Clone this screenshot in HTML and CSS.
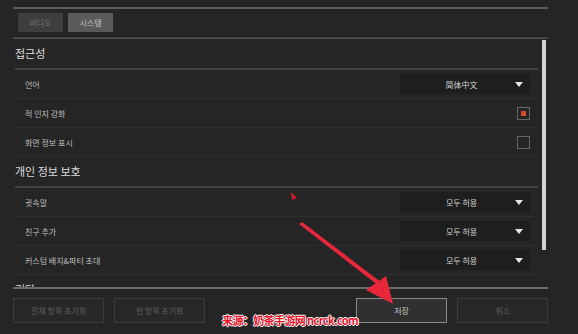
FILE: index.html
```html
<html>
<head>
<title>설정</title>
<meta http-equiv="Content-Type" content="text/html; charset=utf-8" />
<link rel="stylesheet" href="styles.css">
</head>
<body>
<div class="panel">
    <div class="top-line"></div>
    <div class="tabs">
        <div class="tab">비디오</div>
        <div class="tab active">시스템</div>
    </div>
    <div class="sep"></div>

    <div class="content">
        <div class="list">
            <div class="section-title">접근성</div>
            <div class="row">
                <span class="label">언어</span>
                <div class="select"><span>简体中文</span><i class="arrow"></i></div>
            </div>
            <div class="row">
                <span class="label">적 인지 강화</span>
                <div class="check on"></div>
            </div>
            <div class="row">
                <span class="label">화면 정보 표시</span>
                <div class="check"></div>
            </div>

            <div class="section-title">개인 정보 보호</div>
            <div class="row">
                <span class="label">귓속말</span>
                <div class="select"><span>모두 허용</span><i class="arrow"></i></div>
            </div>
            <div class="row">
                <span class="label">친구 추가</span>
                <div class="select"><span>모두 허용</span><i class="arrow"></i></div>
            </div>
            <div class="row">
                <span class="label">커스텀 배지&amp;파티 초대</span>
                <div class="select"><span>모두 허용</span><i class="arrow"></i></div>
            </div>

            <div class="section-title">기타</div>
        </div>
        <div class="scrollbar"><div class="thumb"></div></div>
    </div>

    <div class="bottom-line"></div>
    <div class="buttons">
        <div class="group">
            <div class="btn">전체 항목 초기화</div>
            <div class="btn">현 항목 초기화</div>
        </div>
        <div class="group">
            <div class="btn primary">저장</div>
            <div class="btn">취소</div>
        </div>
    </div>
</div>

<!-- 빨간 화살표 (덧그림) -->
<svg class="overlay" width="578" height="334" viewBox="0 0 578 334">
    <polygon points="291,192 297,198 292,200" fill="#d01c28"/>
    <polygon points="299,224 302,222 382,283 379,286" fill="#e8283a"/>
    <polygon points="366,290 386,276 393,304" fill="#e8283a"/>
</svg>

<div class="watermark">来源：奶茶手游网 ncrck.com</div>
</body>
</html>
```

FILE: styles.css
```css
body {
    margin: 0;
    background-color: #252525;
    font-family: "Noto Sans CJK KR", "Noto Sans", sans-serif;
    color: #bbb;
    width: 578px;
    height: 334px;
    overflow: hidden;
    position: relative;
}
.panel {
    width: 535px;
    margin-left: 13px;
    padding-top: 7px;
}
.top-line {
    height: 2px;
    background-color: #5c5c5c;
}
.tabs {
    display: flex;
    gap: 5px;
    padding: 4px 5px 0 5px;
    height: 20px;
}
.tab {
    width: 45px;
    height: 19px;
    line-height: 19px;
    text-align: center;
    font-size: 8px;
    background-color: #3e3e3e;
    color: #727272;
}
.tab.active {
    background-color: #5a5a5a;
    color: #c4c4c4;
}
.sep {
    height: 1px;
    background-color: #1c1c1c;
    border-bottom: 2px solid #474747;
    margin-top: 3px;
}
.content {
    display: flex;
    height: 248px;
}
.list {
    flex: 1;
    overflow: hidden;
    padding-left: 2px;
    padding-right: 4px;
}
.section-title {
    height: 29px;
    line-height: 29px;
    font-size: 11px;
    color: #dcdcdc;
    border-bottom: 2px solid #434343;
}
.row {
    display: flex;
    align-items: center;
    justify-content: space-between;
    height: 28px;
    padding-left: 10px;
    padding-right: 8px;
    border-bottom: 1px solid #2f2f2f;
}
.label {
    font-size: 8px;
    color: #bdbdbd;
}
.select {
    width: 130px;
    height: 20px;
    background-color: #1e1e1e;
    display: flex;
    align-items: center;
    font-size: 8px;
    color: #d0d0d0;
}
.select span {
    flex: 1;
    text-align: center;
    padding-left: 8px;
}
.arrow {
    width: 0;
    height: 0;
    border-left: 4px solid transparent;
    border-right: 4px solid transparent;
    border-top: 5px solid #e6e6e6;
    margin-right: 7px;
}
.check {
    width: 11px;
    height: 11px;
    border: 1px solid #666;
    display: flex;
    align-items: center;
    justify-content: center;
}
.check.on::after {
    content: "";
    width: 5px;
    height: 5px;
    background-color: #d9482e;
}
.scrollbar {
    width: 6px;
    padding-top: 1px;
}
.thumb {
    width: 4px;
    height: 210px;
    background-color: #d2d2d2;
}
.bottom-line {
    height: 2px;
    background-color: #6a6a6a;
}
.buttons {
    display: flex;
    justify-content: space-between;
    margin-top: 9px;
}
.group {
    display: flex;
    gap: 10px;
}
.btn {
    width: 89px;
    height: 23px;
    line-height: 23px;
    text-align: center;
    font-size: 8px;
    color: #5e5e5e;
    background-color: #282828;
    border: 1px solid #3c3c3c;
}
.btn.primary {
    background-color: #303030;
    border-color: #8a8a8a;
    color: #c8c8c8;
}
.overlay {
    position: absolute;
    left: 0;
    top: 0;
}
.watermark {
    position: absolute;
    left: 222px;
    top: 312px;
    font-size: 11px;
    font-weight: bold;
    color: #e8102a;
    font-family: "Noto Sans CJK SC", "Noto Sans", sans-serif;
    letter-spacing: -0.6px;
    text-shadow: 1px 0 0 #fff, -1px 0 0 #fff, 0 1px 0 #fff, 0 -1px 0 #fff;
}
```
